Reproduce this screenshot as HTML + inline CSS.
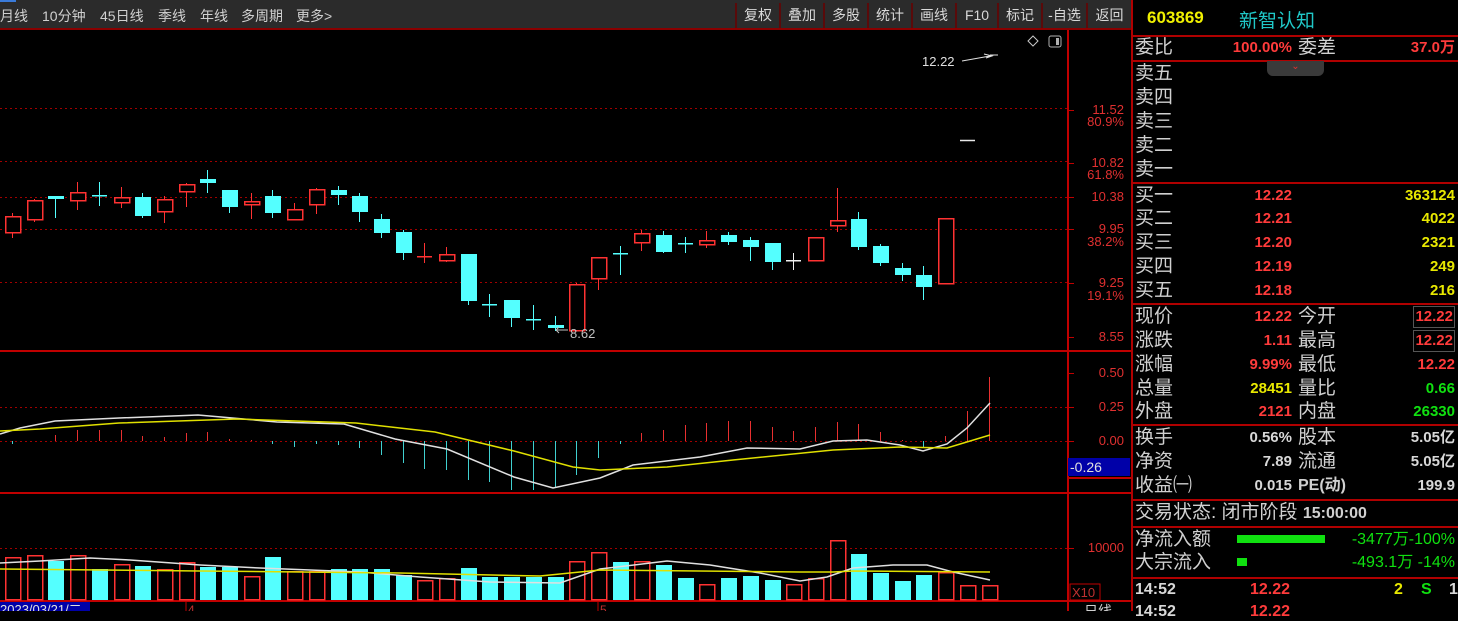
<!DOCTYPE html>
<html><head><meta charset="utf-8">
<style>
*{margin:0;padding:0;box-sizing:border-box}
body{width:1458px;height:611px;background:#000;overflow:hidden;position:relative;font-family:"Liberation Sans","WenQuanYi Zen Hei","Noto Sans CJK SC",sans-serif}
.tb{position:absolute;left:0;top:0;width:1131px;height:30px;background:#2b2b2b;border-bottom:2px solid #8a0000}
.tb span{position:absolute;top:6px;font-size:14px;color:#d0d0d0;white-space:nowrap}
.btn{position:absolute;top:3px;height:25px;border-left:2px solid #5a0a0a;font-size:14px;color:#d8d8d8;text-align:center;line-height:25px}
.rp{position:absolute;left:1131px;top:0;width:327px;height:611px;border-left:2px solid #b00000}
.hl{position:absolute;left:0;width:327px;height:2px;background:#b00000}
.t{position:absolute;white-space:nowrap}
.lb{font-size:19px;color:#d0d0d0;left:2px;line-height:22px}
.lb2{font-size:19px;color:#d0d0d0;left:165px;line-height:22px}
.v1{right:166px;font-size:15px;font-weight:bold;line-height:22px;text-align:right}
.v2{right:3px;font-size:15px;font-weight:bold;line-height:22px;text-align:right}
.r{color:#ff3b3b}.y{color:#e8e800}.g{color:#10e010}.w{color:#d8d8d8}
.ax{position:absolute;font-size:13px;color:#e03030;text-align:right;width:56px;left:1068px;line-height:12px}
</style></head><body>
<div class="tb">
<div style="position:absolute;left:0;top:0;width:16px;height:2px;background:#3a7ad8"></div>
<span style="left:0">月线</span><span style="left:42px">10分钟</span><span style="left:100px">45日线</span><span style="left:158px">季线</span><span style="left:200px">年线</span><span style="left:241px">多周期</span><span style="left:296px">更多&gt;</span>
<div class="btn" style="left:735px;width:44px">复权</div>
<div class="btn" style="left:779px;width:44px">叠加</div>
<div class="btn" style="left:823px;width:44px">多股</div>
<div class="btn" style="left:867px;width:44px">统计</div>
<div class="btn" style="left:911px;width:44px">画线</div>
<div class="btn" style="left:955px;width:42px">F10</div>
<div class="btn" style="left:997px;width:44px">标记</div>
<div class="btn" style="left:1041px;width:45px">-自选</div>
<div class="btn" style="left:1086px;width:45px">返回</div>
</div>
<svg id="ch" width="1131" height="611" style="position:absolute;left:0;top:0" xmlns="http://www.w3.org/2000/svg">
<g stroke="#a00000" stroke-width="1" stroke-dasharray="2,3" shape-rendering="crispEdges">
<line x1="0" y1="108.5" x2="1068" y2="108.5"/><line x1="0" y1="161.5" x2="1068" y2="161.5"/><line x1="0" y1="197.5" x2="1068" y2="197.5"/><line x1="0" y1="229.5" x2="1068" y2="229.5"/><line x1="0" y1="282.5" x2="1068" y2="282.5"/>
<line x1="0" y1="407.5" x2="1068" y2="407.5"/><line x1="0" y1="441.5" x2="1068" y2="441.5"/><line x1="0" y1="548.5" x2="1068" y2="548.5"/>
</g>
<g stroke="#c00000" stroke-width="2" shape-rendering="crispEdges">
<line x1="0" y1="351" x2="1131" y2="351"/><line x1="0" y1="493" x2="1131" y2="493"/><line x1="0" y1="601" x2="1131" y2="601"/>
<line x1="1068" y1="30" x2="1068" y2="611"/>
<line x1="1068" y1="478" x2="1131" y2="478"/>
</g>
<g id="dyn" shape-rendering="crispEdges"></g>
<rect x="1068" y="458" width="62" height="18" fill="#0000a8"/>
<text x="1070" y="472" font-size="14" fill="#e0e0e0" font-family="Liberation Sans">-0.26</text>
<rect x="1070" y="584" width="30" height="16" fill="none" stroke="#c00000"/>
<text x="1072" y="597" font-size="13" fill="#c03030" font-family="Liberation Sans">X10</text>
<rect x="0" y="602" width="90" height="9" fill="#0000a8"/>
<text x="0" y="614" font-size="13" fill="#e0e0e0" font-family="Liberation Sans">2023/03/21/二</text>
<text x="188" y="614" font-size="12" fill="#c03030">4</text><line x1="186" y1="602" x2="186" y2="611" stroke="#c00000"/>
<text x="600" y="614" font-size="12" fill="#c03030">5</text><line x1="598" y1="602" x2="598" y2="611" stroke="#c00000"/>
<text x="1084" y="616" font-size="14" fill="#d0d0d0">日线</text>
<text x="922" y="66" font-size="13" fill="#e0e0e0" font-family="Liberation Sans">12.22</text>
<path d="M962 61 L990 56 M984 54 L992 56 L986 58 M990 55 L998 55" stroke="#e0e0e0" fill="none"/>
<text x="570" y="338" font-size="13" fill="#c0c0c0" font-family="Liberation Sans">8.62</text>
<path d="M556 330 L568 330 M556 330 L559 327 M556 330 L559 333" stroke="#c0c0c0"/>
<line x1="960" y1="140.5" x2="975" y2="140.5" stroke="#e8e8e8" stroke-width="1.5"/>
<path d="M1033 36 L1038 41 L1033 46 L1028 41 Z" fill="none" stroke="#c8c8c8"/>
<rect x="1049" y="36" width="12" height="11" rx="2" fill="none" stroke="#b0b0b0"/><rect x="1056" y="38" width="3" height="7" fill="#b0b0b0"/>
</svg>
<div class="ax" style="top:104px">11.52</div><div class="ax" style="top:116px">80.9%</div>
<div class="ax" style="top:157px">10.82</div><div class="ax" style="top:169px">61.8%</div>
<div class="ax" style="top:191px">10.38</div>
<div class="ax" style="top:223px">9.95</div><div class="ax" style="top:236px">38.2%</div>
<div class="ax" style="top:277px">9.25</div><div class="ax" style="top:290px">19.1%</div>
<div class="ax" style="top:331px">8.55</div>
<div class="ax" style="top:367px">0.50</div><div class="ax" style="top:401px">0.25</div><div class="ax" style="top:435px">0.00</div>
<div class="ax" style="top:542px">10000</div>

<div class="rp">
<div class="t" style="left:14px;top:8px;font-size:17px;font-weight:bold;color:#f0f000">603869</div>
<div class="t" style="left:106px;top:6px;font-size:19px;color:#20c8c8">新智认知</div>
<div class="hl" style="top:35px"></div>
<div class="t lb" style="top:37px">委比</div><div class="t v1 r" style="top:37px">100.00%</div><div class="t lb2" style="top:37px">委差</div><div class="t v2 r" style="top:37px">37.0万</div>
<div class="hl" style="top:60px"></div>
<div class="t" style="left:134px;top:61px;width:57px;height:15px;background:#3a3a3a;border-radius:0 0 6px 6px;color:#e03030;font-size:10px;text-align:center;line-height:12px">⌄</div>
<div class="t lb" style="top:63px">卖五</div><div class="t lb" style="top:87px">卖四</div><div class="t lb" style="top:111px">卖三</div><div class="t lb" style="top:135px">卖二</div><div class="t lb" style="top:159px">卖一</div>
<div class="hl" style="top:182px"></div>
<div class="t lb" style="top:185px">买一</div><div class="t v1 r" style="top:185px">12.22</div><div class="t v2 y" style="top:185px">363124</div>
<div class="t lb" style="top:208px">买二</div><div class="t v1 r" style="top:208px">12.21</div><div class="t v2 y" style="top:208px">4022</div>
<div class="t lb" style="top:232px">买三</div><div class="t v1 r" style="top:232px">12.20</div><div class="t v2 y" style="top:232px">2321</div>
<div class="t lb" style="top:256px">买四</div><div class="t v1 r" style="top:256px">12.19</div><div class="t v2 y" style="top:256px">249</div>
<div class="t lb" style="top:280px">买五</div><div class="t v1 r" style="top:280px">12.18</div><div class="t v2 y" style="top:280px">216</div>
<div class="hl" style="top:303px"></div>
<div class="t lb" style="top:306px">现价</div><div class="t v1 r" style="top:306px">12.22</div><div class="t lb2" style="top:306px">今开</div><div class="t v2 r" style="top:306px;border:1px solid #555;padding:0 1px;line-height:20px">12.22</div>
<div class="t lb" style="top:330px">涨跌</div><div class="t v1 r" style="top:330px">1.11</div><div class="t lb2" style="top:330px">最高</div><div class="t v2 r" style="top:330px;border:1px solid #555;padding:0 1px;line-height:20px">12.22</div>
<div class="t lb" style="top:354px">涨幅</div><div class="t v1 r" style="top:354px">9.99%</div><div class="t lb2" style="top:354px">最低</div><div class="t v2 r" style="top:354px">12.22</div>
<div class="t lb" style="top:378px">总量</div><div class="t v1 y" style="top:378px">28451</div><div class="t lb2" style="top:378px">量比</div><div class="t v2 g" style="top:378px">0.66</div>
<div class="t lb" style="top:401px">外盘</div><div class="t v1 r" style="top:401px">2121</div><div class="t lb2" style="top:401px">内盘</div><div class="t v2 g" style="top:401px">26330</div>
<div class="hl" style="top:424px"></div>
<div class="t lb" style="top:427px">换手</div><div class="t v1 w" style="top:427px">0.56%</div><div class="t lb2" style="top:427px">股本</div><div class="t v2 w" style="top:427px">5.05亿</div>
<div class="t lb" style="top:451px">净资</div><div class="t v1 w" style="top:451px">7.89</div><div class="t lb2" style="top:451px">流通</div><div class="t v2 w" style="top:451px">5.05亿</div>
<div class="t lb" style="top:475px">收益㈠</div><div class="t v1 w" style="top:475px">0.015</div><div class="t lb2" style="top:475px;font-size:16px;font-weight:bold">PE(动)</div><div class="t v2 w" style="top:475px">199.9</div>
<div class="hl" style="top:499px"></div>
<div class="t lb" style="top:502px">交易状态: 闭市阶段 <b style="font-size:16px">15:00:00</b></div>
<div class="hl" style="top:526px"></div>
<div class="t lb" style="top:529px">净流入额</div><div class="t" style="left:104px;top:535px;width:88px;height:8px;background:#10e010"></div><div class="t v2 g" style="top:529px;font-weight:normal;font-size:16px">-3477万-100%</div>
<div class="t lb" style="top:552px">大宗流入</div><div class="t" style="left:104px;top:558px;width:10px;height:8px;background:#10e010"></div><div class="t v2 g" style="top:552px;font-weight:normal;font-size:16px">-493.1万 -14%</div>
<div class="hl" style="top:577px"></div>
<div class="t" style="left:2px;top:581px;font-size:16px;font-weight:bold;color:#d8d8d8">14:52</div>
<div class="t r" style="left:117px;top:581px;font-size:16px;font-weight:bold">12.22</div>
<div class="t y" style="left:261px;top:581px;font-size:16px;font-weight:bold">2</div>
<div class="t g" style="left:288px;top:581px;font-size:16px;font-weight:bold">S</div>
<div class="t w" style="left:316px;top:581px;font-size:16px;font-weight:bold">1</div>
<div class="t" style="left:2px;top:603px;font-size:16px;font-weight:bold;color:#d8d8d8">14:52</div>
<div class="t r" style="left:117px;top:603px;font-size:16px;font-weight:bold">12.22</div>
</div>
<script>
var R="#ff3232",C="#54ffff",W="#f0f0f0";
var cd=[["r",216,232,213,238],["r",200,219,199,222],["c",196,199,196,218],["r",192,200,182,210],["cx",195,195,182,206],["r",197,202,187,208],["c",197,216,193,218],["r",199,211,196,223],["r",184,191,183,207],["c",179,183,170,193],["c",190,207,190,213],["r",201,204,193,219],["c",196,213,190,218],["r",209,219,203,219],["r",189,204,188,214],["c",190,195,186,205],["c",196,212,193,222],["c",219,233,214,238],["c",232,253,230,260],["rx",256,256,243,263],["r",254,260,247,262],["c",254,301,254,305],["cx",304,304,294,317],["c",300,318,300,327],["cx",319,319,305,330],["c",325,328,316,331],["r",284,330,283,330],["r",257,278,257,290],["cx",253,253,246,275],["r",233,242,230,251],["c",235,252,231,253],["cx",243,243,237,253],["r",240,244,231,248],["c",235,242,232,245],["c",240,247,237,261],["c",243,262,243,270],["wx",260,260,253,270],["r",237,260,237,260],["r",220,225,188,232],["c",219,247,212,250],["c",246,263,244,266],["c",268,275,263,281],["c",275,287,266,300],["r",218,283,218,283]];
var s="";function X(i){return Math.round(12+21.7*i)}
cd.forEach(function(d,i){var x=X(i),t=d[0];var col=t[0]=="r"?R:(t[0]=="c"?C:W);
s+='<line x1="'+(x+.5)+'" y1="'+d[3]+'" x2="'+(x+.5)+'" y2="'+d[4]+'" stroke="'+col+'"/>';
if(t.length==2){s+='<line x1="'+(x-7)+'" y1="'+(d[1]+.5)+'" x2="'+(x+8)+'" y2="'+(d[1]+.5)+'" stroke="'+col+'" stroke-width="1.5"/>';}
else if(t=="c"){s+='<rect x="'+(x-7)+'" y="'+d[1]+'" width="16" height="'+Math.max(3,d[2]-d[1])+'" fill="'+C+'"/>';}
else{s+='<rect x="'+(x-6.5)+'" y="'+(d[1]+.5)+'" width="15" height="'+Math.max(3,d[2]-d[1])+'" fill="#000" stroke="'+R+'" stroke-width="1.5"/>';}});
var vt=[557,555,561,555,569,564,566,569,562,567,567,576,557,571,571,569,569,569,575,580,578,568,577,577,577,577,561,552,562,561,565,578,584,578,576,580,584,578,540,554,573,581,575,572,585,585];
var vc="rrcrcrcrrccrcrrccccrrccccc rrcrccrcccrrrccccrrr".replace(" ","");
vt.forEach(function(t,i){var x=X(i);if(vc[i]=="c")s+='<rect x="'+(x-7)+'" y="'+t+'" width="16" height="'+(600-t)+'" fill="'+C+'"/>';else s+='<rect x="'+(x-6.5)+'" y="'+(t+.5)+'" width="15" height="'+(599-t)+'" fill="none" stroke="'+R+'" stroke-width="1.5"/>';});
var mb=[444,441,435,430,430,430,436,437,433,432,439,440,444,447,444,445,448,455,463,469,470,480,482,490,490,487,475,458,444,433,430,425,423,421,421,427,431,427,422,424,432,440,447,436,411,377];
mb.forEach(function(v,i){var x=X(i)+.5;if(v!=441)s+='<line x1="'+x+'" y1="441" x2="'+x+'" y2="'+v+'" stroke="'+(v<441?"#e83030":"#40d0d0")+'"/>';});
function pl(p,c){s+='<polyline points="'+p+'" fill="none" stroke="'+c+'" stroke-width="1.5" shape-rendering="auto"/>';}
pl("0,434 20,428 55,421 119,418 198,415 221,417 277,422 344,424 395,439 447,449 514,477 553,488 600,478 633,465 700,457 747,448 800,449 833,441 867,440 900,445 923,451 947,444 967,428 990,403","#e0e0e0");
pl("0,431 40,429 119,423 237,419 356,423 435,432 514,451 573,467 600,470 667,467 733,460 833,450 900,447 947,448 990,435","#e0e000");
pl("0,563 40,561 90,558 130,560 200,565 260,568 360,572 420,577 490,582 560,583 600,569 667,561 710,565 760,573 800,581 827,577 853,568 893,565 927,565 953,572 990,580","#e0e0e0");
pl("0,569 200,571 400,573 540,576 600,570 800,572 833,572 853,571 990,572","#e0e000");
[110,163,197,229,283,337,373,407,441,548].forEach(function(y){s+='<line x1="1068" y1="'+(y+.5)+'" x2="1074" y2="'+(y+.5)+'" stroke="#c00000"/>';});
document.getElementById("dyn").innerHTML=s;
</script>
</body></html>
